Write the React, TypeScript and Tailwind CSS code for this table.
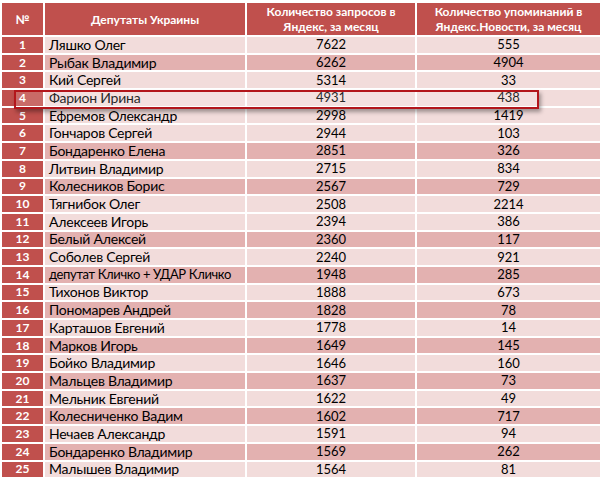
const rows: [number, string, number, number][] = [
  [1, "Ляшко Олег", 7622, 555],
  [2, "Рыбак Владимир", 6262, 4904],
  [3, "Кий Сергей", 5314, 33],
  [4, "Фарион Ирина", 4931, 438],
  [5, "Ефремов Олександр", 2998, 1419],
  [6, "Гончаров Сергей", 2944, 103],
  [7, "Бондаренко Елена", 2851, 326],
  [8, "Литвин Владимир", 2715, 834],
  [9, "Колесников Борис", 2567, 729],
  [10, "Тягнибок Олег", 2508, 2214],
  [11, "Алексеев Игорь", 2394, 386],
  [12, "Белый Алексей", 2360, 117],
  [13, "Соболев Сергей", 2240, 921],
  [14, "депутат Кличко + УДАР Кличко", 1948, 285],
  [15, "Тихонов Виктор", 1888, 673],
  [16, "Пономарев Андрей", 1828, 78],
  [17, "Карташов Евгений", 1778, 14],
  [18, "Марков Игорь", 1649, 145],
  [19, "Бойко Владимир", 1646, 160],
  [20, "Мальцев Владимир", 1637, 73],
  [21, "Мельник Евгений", 1622, 49],
  [22, "Колесниченко Вадим", 1602, 717],
  [23, "Нечаев Александр", 1591, 94],
  [24, "Бондаренко Владимир", 1569, 262],
  [25, "Малышев Владимир", 1564, 81],
];

// rows with the darker band
const dark = new Set([2, 7, 9, 12, 14, 16, 18, 20, 22, 24]);

const cols = "grid grid-cols-[41px_200px_168px_183px] gap-x-[2px]";

export default function App() {
  return (
    <div className="relative w-[604px] h-[479px] overflow-hidden bg-white pl-[2px] pt-[3px] font-['Lato','Liberation_Sans',sans-serif]">
      <div className="flex flex-col gap-y-[2px]">
        {/* Header */}
        <div className={`${cols} h-[32px] text-white font-bold text-[12px] leading-[15px]`}>
          <div className="bg-[#c0504d] flex items-center justify-center">№</div>
          <div className="bg-[#c0504d] flex items-center justify-center">Депутаты Украины</div>
          <div className="bg-[#c0504d] flex items-center justify-center text-center">
            Количество запросов в<br />Яндекс, за месяц
          </div>
          <div className="bg-[#c0504d] flex items-center justify-center text-center">
            Количество упоминаний в<br />Яндекс.Новости, за месяц
          </div>
        </div>

        {rows.map(([n, name, q, m]) => {
          const bg = dark.has(n) ? "bg-[#e3b1b0]" : "bg-[#f2dcdb]";
          const nameSize = n === 14 ? "text-[13px] tracking-[-0.35px]" : "text-[14px] tracking-[-0.25px]";
          return (
            <div key={n} className={`${cols} h-[15.7px] text-[13px] leading-none text-black`}>
              <div className="bg-[#c0504d] flex items-center justify-center text-white font-bold text-[12px]">{n}</div>
              <div className={`${bg} ${nameSize} flex items-center pl-[4px] whitespace-nowrap`}>{name}</div>
              <div className={`${bg} flex items-center justify-center`}>{q}</div>
              <div className={`${bg} flex items-center justify-center`}>{m}</div>
            </div>
          );
        })}
      </div>

      {/* highlight around row 4 */}
      <div className="absolute left-[14px] top-[90px] w-[525px] h-[19px] border-2 border-[#b3161b] bg-white/15 shadow-[2px_3px_4px_rgba(0,0,0,0.35)]" />
    </div>
  );
}
